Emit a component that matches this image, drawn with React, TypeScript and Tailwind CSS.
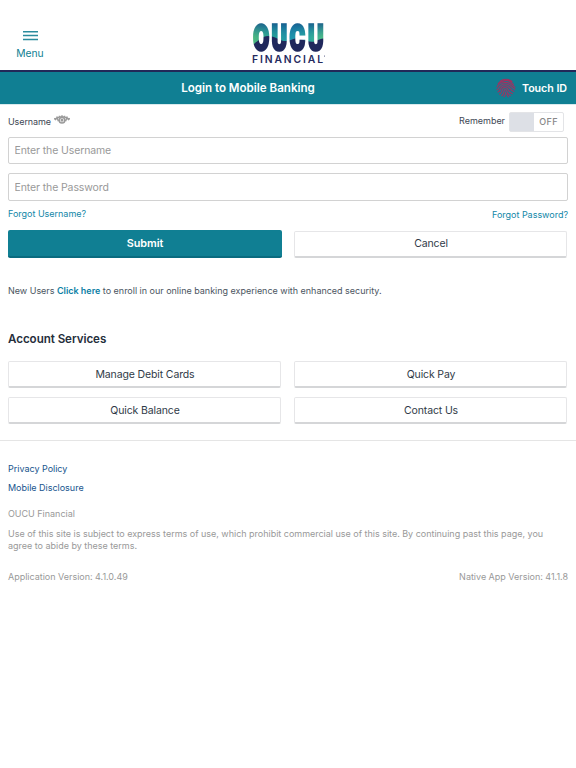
import React, { useState } from 'react'

const services = ['Manage Debit Cards', 'Quick Pay', 'Quick Balance', 'Contact Us']

const Logo = () => (
  <svg width="76" height="44" viewBox="0 0 76 44" role="img" aria-label="OUCU Financial">
    <defs>
      <linearGradient id="sea" x1="0" y1="0" x2="1" y2="0">
        <stop offset="0" stopColor="#5cc276" />
        <stop offset="0.28" stopColor="#2aa595" />
        <stop offset="0.55" stopColor="#1c93ae" />
        <stop offset="0.8" stopColor="#2fae9c" />
        <stop offset="1" stopColor="#5cc47c" />
      </linearGradient>
      <linearGradient id="depth" x1="0" y1="0" x2="0" y2="1">
        <stop offset="0" stopColor="#164b85" stopOpacity="0.95" />
        <stop offset="0.3" stopColor="#16639a" stopOpacity="0.55" />
        <stop offset="0.65" stopColor="#1f8ca0" stopOpacity="0.1" />
        <stop offset="1" stopColor="#5cc276" stopOpacity="0.4" />
      </linearGradient>
      <mask id="letters" maskUnits="userSpaceOnUse" x="0" y="0" width="76" height="34">
        <g transform="translate(0 29.4) scale(0.64 1)" fill="#fff" stroke="#fff" strokeWidth="3.6" fontFamily="Roboto, sans-serif" fontWeight="700" fontSize="35.8" textAnchor="middle">
          <text x="17.3 45.7 73.8 102.8" y="0">OUCU</text>
        </g>
      </mask>
    </defs>
    <g mask="url(#letters)">
      <rect width="76" height="34" fill="url(#sea)" />
      <rect width="76" height="26" fill="url(#depth)" />
      <path d="M0 24 C7 23 11 15 18 15 C26 15 30 21 37 20 C43 19 46 16 51 18 C57 20 61 22 66 20 C70 18 73 17 76 18 V34 H0Z" fill="#20285c" />
    </g>
    <text x="2" y="41.5" textLength="71" fontFamily="Inter, sans-serif" fontWeight="600" fontSize="10.3" fill="#252a5e">FINANCIAL</text>
    <circle cx="74.5" cy="35" r="0.5" fill="#252a5e" />
  </svg>
)

const Fingerprint = () => (
  <svg width="20" height="20" viewBox="0 0 20 20" fill="none" stroke="#a52f5f" strokeWidth="1.05" strokeLinecap="round">
    <path d="M4 3.5a9 9 0 0 1 12 0M2.2 5.6C3.8 3.6 5.6 4 7 3.2c2-1 5.4-.8 7.4.8 1 .8 2.2 1.5 3 2.4" />
    <path d="M1 9.2c1-3.2 3.6-4 5.4-4.4 3-.8 6.2-.2 8.3 1.4 1.6 1.2 3 2 4.2 3.2" />
    <path d="M1 11.8c2.2-.8 1.8-3.2 4.2-4.7 2.7-1.7 6.7-1.4 8.8.6 1.8 1.8 2.8 2.8 4.8 3.6" />
    <path d="M2 14c2.6-1 2-3.4 3.8-5 2.2-2 5.6-1.6 7.2.4 1.5 2 2.6 3.4 5 4" />
    <path d="M3.6 16.2c2.8-1.6 2-4 3.4-5.8 1.4-1.6 3.8-1.2 4.8.6 1 2 2.2 3.8 4.6 4.8" />
    <path d="M5.8 17.8c2.4-1.8 1.6-4 2.6-5.6.8-1 2-.6 2.4.6.6 2 1.6 3.6 3.6 4.8M8 18.8c1.6-1.4 1.4-3 1.6-4.8M11 15.8c.2 1.2.6 2.2 1.4 3" />
  </svg>
)

const WingedEye = () => (
  <svg width="16" height="10" viewBox="0 0 16 10" fill="none" stroke="#9a9a9a" strokeWidth="1.5">
    <path d="M1 5.2C2.8 2.2 5 1.8 8 1.8s5.2.4 7 3.4M3 1.5v1.5M5.5.8v1.5M8 .3v1.5M10.5.8v1.5M13 1.5v1.5M.5 3l.8 1.8M15.5 3l-.8 1.8M3.3 3.2l1.2 3M12.7 3.2l-1.2 3" />
    <circle cx="8" cy="5.2" r="2.8" />
    <circle cx="8" cy="5.2" r="0.7" fill="#9a9a9a" />
  </svg>
)

const OutlineButton = ({ children }: { children: React.ReactNode }) => (
  <button className="mr-px h-[27px] rounded-[2px] border border-[#e6e6e8] border-b-2 border-b-[#d5d6d8] bg-white pt-px pl-px text-[10.5px] tracking-[-0.13px] text-[#303a47]">
    {children}
  </button>
)

const App = () => {
  const [remember, setRemember] = useState(false)
  const [username, setUsername] = useState('')
  const [password, setPassword] = useState('')

  return (
    <div className="h-[768px] w-[576px] overflow-hidden bg-white font-['Inter',sans-serif] text-[9px] leading-3 tracking-[-0.015px] text-[#3d4754]">
      <header className="grid h-[72px] grid-cols-[60px_1fr_60px] border-b-2 border-[#222858]">
        <button className="flex flex-col items-center pt-[31px] text-[10.3px] leading-[14px] text-[#107f93]">
          <svg width="15" height="10" viewBox="0 0 15 10" stroke="#2b8b9d" strokeWidth="1.5">
            <path d="M0 .8h15M0 4.6h15M0 8.5h15" />
          </svg>
          <span className="mt-[5px]">Menu</span>
        </button>
        <div className="flex justify-center pt-[21px]">
          <Logo />
        </div>
      </header>

      <div className="grid h-8 grid-cols-[1fr_80px] items-center bg-[#107f93] text-white">
        <h1 className="text-center text-[11.6px] font-semibold">Login to Mobile Banking</h1>
        <button className="flex items-center justify-end gap-1.5 pr-[9px] text-[10.7px] font-semibold tracking-[-0.05px] whitespace-nowrap">
          <Fingerprint />
          <span className="pt-px">Touch ID</span>
        </button>
      </div>

      <main className="border-t border-[#d9eaed] px-2">
        <div className="flex h-8 justify-between">
          <label htmlFor="username" className="flex items-start pt-[11px] tracking-[-0.1px]">
            Username
            <span className="-mt-px ml-[3px]"><WingedEye /></span>
          </label>
          <div className="flex items-start pt-[7px] pr-1">
            <span className="mt-[3px] mr-1">Remember</span>
            <button
              onClick={() => setRemember(!remember)}
              className="flex h-5 w-[55px] rounded-[2px] border border-[#e3e4e7] bg-white"
            >
              <span className="h-full w-6 bg-[#dde0e6]" />
              <span className="flex-1 text-center text-[9px] leading-[18px] font-medium tracking-[0.4px] text-[#888]">{remember ? 'ON' : 'OFF'}</span>
            </button>
          </div>
        </div>
        <input
          id="username"
          value={username}
          onChange={(e) => setUsername(e.target.value)}
          placeholder="Enter the Username"
          className="block h-[27px] w-full rounded-[2px] border border-[#d2d2d2] px-[5.5px] text-[10.5px] tracking-[-0.11px] placeholder:text-[#999]"
        />
        <input
          type="password"
          value={password}
          onChange={(e) => setPassword(e.target.value)}
          placeholder="Enter the Password"
          className="mt-[9px] block h-[28px] w-full rounded-[2px] border border-[#d2d2d2] px-[5.5px] text-[10.5px] tracking-[-0.11px] placeholder:text-[#999]"
        />
        <div className="mt-[7px] flex h-[22px] justify-between text-[#1287a8]">
          <a href="#">Forgot Username?</a>
          <a href="#" className="mt-px">Forgot Password?</a>
        </div>

        <div className="grid grid-cols-2 items-center gap-x-3">
          <button className="h-7 rounded-[2px] border-b-2 border-[#0a6b7f] bg-[#107f93] pt-px text-[10.8px] font-semibold text-white">Submit</button>
          <OutlineButton>Cancel</OutlineButton>
        </div>

        <p className="mt-[27px] text-[#4b5561]">
          New Users <a href="#" className="font-semibold text-[#0d80a5]">Click here</a> to enroll in our online banking experience with enhanced security.
        </p>

        <h2 className="mt-[34px] text-[11.6px] leading-4 font-semibold tracking-[-0.05px] text-[#252e3b]">Account Services</h2>
        <div className="mt-[14px] grid grid-cols-2 gap-x-3 gap-y-[9px]">
          {services.map((service) => (
            <OutlineButton key={service}>{service}</OutlineButton>
          ))}
        </div>
      </main>

      <footer className="mt-4 border-t border-[#e5e5e5] px-2 pt-[22px] text-[#999]">
        <a href="#" className="block text-[#17548d]">Privacy Policy</a>
        <a href="#" className="mt-[7px] block text-[#17548d]">Mobile Disclosure</a>
        <p className="mt-[14px]">OUCU Financial</p>
        <p className="mt-2">
          Use of this site is subject to express terms of use, which prohibit commercial use of this site. By continuing past this page, you<br />
          agree to abide by these terms.
        </p>
        <div className="mt-[19px] flex justify-between">
          <span>Application Version: 4.1.0.49</span>
          <span>Native App Version: 41.1.8</span>
        </div>
      </footer>
    </div>
  )
}

export default App
